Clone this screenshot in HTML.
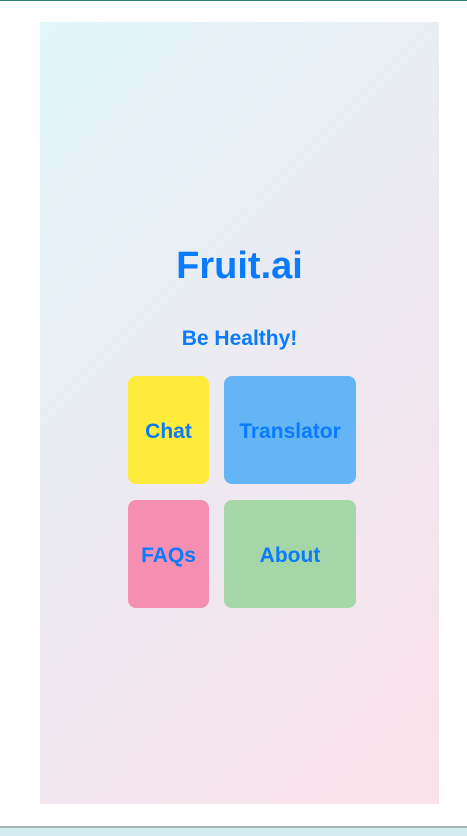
<!DOCTYPE html>
<html><head><style>
*{margin:0;padding:0;box-sizing:border-box}
body{width:467px;height:836px;background:#fff;position:relative;overflow:hidden;font-family:"Liberation Sans",sans-serif}
.top{position:absolute;left:0;top:0;width:467px;height:1px;background:#2e7b7b}
.panel{position:absolute;left:40px;top:22px;width:399px;height:782px;background:linear-gradient(135deg,#e0f6f9 0%,#ede9f1 50%,#fbe2ea 100%)}
.t{position:absolute;left:40px;width:399px;text-align:center;color:#0a7bfc;font-weight:bold}
.b{position:absolute;border-radius:8px;display:flex;align-items:center;justify-content:center;color:#0a7bfc;font-weight:bold;font-size:21px;padding-top:4px}
.bot{position:absolute;left:0;top:826px;width:467px;height:10px;background:#d3ecef;border-top:2px solid #a7b4b6}
</style></head><body>
<div class="top"></div>
<div class="panel"></div>
<div class="t" style="top:245px;font-size:38px">Fruit.ai</div>
<div class="t" style="top:327px;font-size:21px">Be Healthy!</div>
<div class="b" style="left:128px;top:376px;width:81px;height:108px;background:#ffeb3b">Chat</div>
<div class="b" style="left:224px;top:376px;width:132px;height:108px;background:#64b5f6">Translator</div>
<div class="b" style="left:128px;top:500px;width:81px;height:108px;background:#f48fb1">FAQs</div>
<div class="b" style="left:224px;top:500px;width:132px;height:108px;background:#a5d6a7">About</div>
<div class="bot"></div>
</body></html>
